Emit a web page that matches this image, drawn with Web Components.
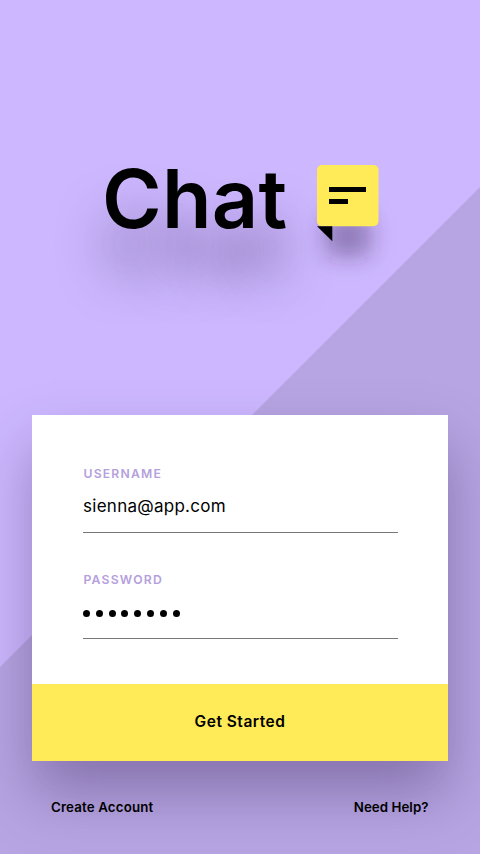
<!DOCTYPE html>
<html lang="en">
<head>
<meta charset="utf-8">
<title>Chat</title>
<style>
body { margin: 0; font-family: "Inter", "Liberation Sans", sans-serif; color: #000; }
</style>
</head>
<body>
<chat-login></chat-login>
<script>
class ChatElement extends HTMLElement {
  constructor() {
    super();
    this.attachShadow({ mode: "open" }).innerHTML = this.template();
  }
}

class ChatBrand extends ChatElement {
  template() {
    return `<style>
:host { display: flex; align-items: flex-start; padding: 159px 0 0 102px; height: 256px; box-sizing: border-box; }
.word { width: 215px; font-size: 81px; line-height: 80px; font-weight: 600; letter-spacing: .2px; white-space: nowrap;
  text-shadow: 0 46px 46px rgba(60, 40, 90, .55); }
svg { display: block; width: 62px; height: 77px; margin-top: 6px; overflow: visible; }
</style>
<span class="word">Chat</span>
<svg viewBox="0 0 62 77" aria-hidden="true">
  <filter id="soft" x="-100%" y="-100%" width="300%" height="300%"><feGaussianBlur stdDeviation="11"/></filter>
  <rect filter="url(#soft)" x="8" y="50" width="46" height="42" rx="8" fill="#3c285a" fill-opacity=".42"/>
  <rect width="61.5" height="61.3" rx="5" fill="#ffeb57"/>
  <path d="M0 61.3H15.3V76.3Z"/>
  <path d="M12 22H49V27H12ZM12 34H31V39H12Z"/>
</svg>`;
  }
}

class ChatField extends ChatElement {
  template() {
    return `<style>
:host { display: flex; flex-direction: column; width: 314.5px; height: 106px; box-sizing: border-box; }
.label { height: 16px; padding-left: .5px; font-size: 12.2px; line-height: 15px; font-weight: 600; letter-spacing: 1.2px; color: #b5a0dd; }
.value { height: 51px; box-sizing: border-box; padding-top: 11px; border-bottom: 1px solid #777; font-size: 17px; line-height: 26px; white-space: nowrap; letter-spacing: .27px; }
</style>
<div class="label"><slot name="label"></slot></div>
<div class="value"><slot></slot></div>`;
  }
}

class ChatPassword extends ChatElement {
  template() {
    return `<style>
:host { display: flex; align-items: center; gap: 5.8px; padding-top: 11.2px; }
i { width: 7px; height: 7px; border-radius: 50%; background: #000; }
</style>${"<i></i>".repeat(8)}`;
  }
}

class ChatCard extends ChatElement {
  template() {
    return `<style>
:host { display: flex; flex-direction: column; width: 416px; height: 345.6px; margin: 159px 0 0 32px; background: #fff; box-shadow: 0 32px 56px rgba(40, 20, 70, .34); }
.fields { height: 269px; box-sizing: border-box; padding: 51px 0 0 51px; }
.action { flex: 1; display: flex; align-items: center; justify-content: center; background: #ffeb57; font-size: 15.5px; font-weight: 600; letter-spacing: .5px; padding-bottom: 2px; }
</style>
<div class="fields"><slot></slot></div>
<div class="action"><slot name="action"></slot></div>`;
  }
}

class ChatLogin extends ChatElement {
  template() {
    return `<style>
:host { display: block; width: 480px; height: 854px; overflow: hidden; background: #cdb8ff; }
.page { height: 854px; display: flex; flex-direction: column;
  background: url("data:image/svg+xml,%3Csvg xmlns='http://www.w3.org/2000/svg' width='480' height='854'%3E%3Cpath d='M480 187V854H0V667Z' fill='%23b7a5e3'/%3E%3C/svg%3E"); }
.links { display: flex; justify-content: space-between; padding: 36.4px 51.5px 0 51px; font-size: 13.3px; line-height: 20px; font-weight: 600; letter-spacing: .15px; }
.links span + span { letter-spacing: .05px; }
</style>
<div class="page">
  <chat-brand></chat-brand>
  <chat-card>
    <chat-field><span slot="label">USERNAME</span>sienna@app.com</chat-field>
    <chat-field><span slot="label">PASSWORD</span><chat-password aria-label="Password"></chat-password></chat-field>
    <span slot="action">Get Started</span>
  </chat-card>
  <div class="links"><span>Create Account</span><span>Need Help?</span></div>
</div>`;
  }
}

customElements.define("chat-brand", ChatBrand);
customElements.define("chat-field", ChatField);
customElements.define("chat-password", ChatPassword);
customElements.define("chat-card", ChatCard);
customElements.define("chat-login", ChatLogin);
</script>
</body>
</html>
